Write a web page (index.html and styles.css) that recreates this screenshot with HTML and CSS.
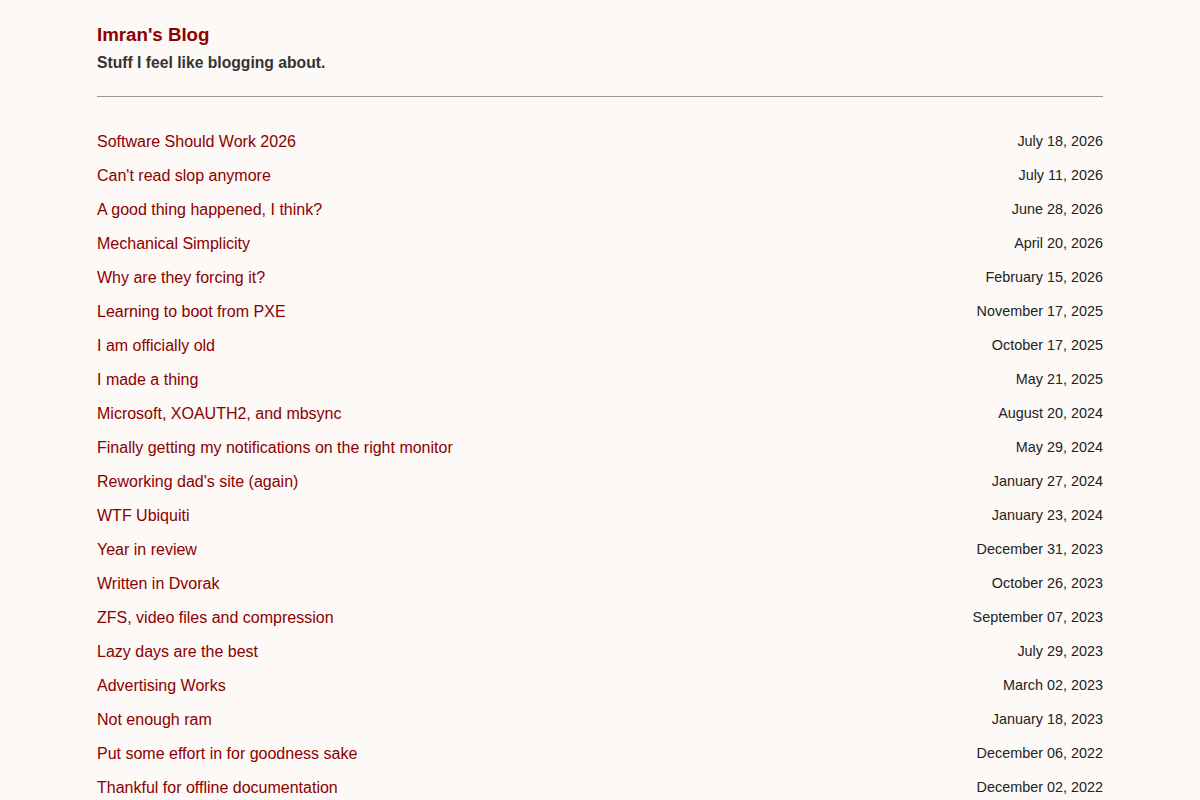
FILE: index.html
```html
<!DOCTYPE html>
<html lang="en">
<head>
    <meta charset="UTF-8">
    <meta name="viewport" content="width=device-width, initial-scale=1.0">
    <title>Imran's Blog</title>
    <link rel="stylesheet" href="styles.css">
</head>
<body>
    <div class="container">
        <header class="site-header">
            <h1 class="site-title"><a href="#">Imran's Blog</a></h1>
            <p class="tagline">Stuff I feel like blogging about.</p>
        </header>
        <hr>
        <ul class="posts">
            <li><a href="#">Software Should Work 2026</a><span class="date">July 18, 2026</span></li>
            <li><a href="#">Can't read slop anymore</a><span class="date">July 11, 2026</span></li>
            <li><a href="#">A good thing happened, I think?</a><span class="date">June 28, 2026</span></li>
            <li><a href="#">Mechanical Simplicity</a><span class="date">April 20, 2026</span></li>
            <li><a href="#">Why are they forcing it?</a><span class="date">February 15, 2026</span></li>
            <li><a href="#">Learning to boot from PXE</a><span class="date">November 17, 2025</span></li>
            <li><a href="#">I am officially old</a><span class="date">October 17, 2025</span></li>
            <li><a href="#">I made a thing</a><span class="date">May 21, 2025</span></li>
            <li><a href="#">Microsoft, XOAUTH2, and mbsync</a><span class="date">August 20, 2024</span></li>
            <li><a href="#">Finally getting my notifications on the right monitor</a><span class="date">May 29, 2024</span></li>
            <li><a href="#">Reworking dad's site (again)</a><span class="date">January 27, 2024</span></li>
            <li><a href="#">WTF Ubiquiti</a><span class="date">January 23, 2024</span></li>
            <li><a href="#">Year in review</a><span class="date">December 31, 2023</span></li>
            <li><a href="#">Written in Dvorak</a><span class="date">October 26, 2023</span></li>
            <li><a href="#">ZFS, video files and compression</a><span class="date">September 07, 2023</span></li>
            <li><a href="#">Lazy days are the best</a><span class="date">July 29, 2023</span></li>
            <li><a href="#">Advertising Works</a><span class="date">March 02, 2023</span></li>
            <li><a href="#">Not enough ram</a><span class="date">January 18, 2023</span></li>
            <li><a href="#">Put some effort in for goodness sake</a><span class="date">December 06, 2022</span></li>
            <li><a href="#">Thankful for offline documentation</a><span class="date">December 02, 2022</span></li>
        </ul>
    </div>
</body>
</html>
```

FILE: styles.css
```css
body {
    font-family: "Liberation Sans", Arial, sans-serif;
    background: #fdf9f6;
    color: #222;
    margin: 0;
    padding: 0;
}
.container {
    width: 1006px;
    margin: 0 auto;
    padding-top: 24px;
}
a {
    color: #8b0000;
    text-decoration: none;
}
.site-title {
    font-size: 18.7px;
    line-height: 22px;
    margin: 0;
}
.tagline {
    font-size: 15.7px;
    line-height: 18px;
    font-weight: bold;
    color: #333;
    margin: 8px 0 0;
}
hr {
    border: none;
    border-top: 1px solid #999;
    margin: 24px 0 27px;
}
.posts {
    list-style: none;
    margin: 0;
    padding: 0;
}
.posts li {
    display: flex;
    justify-content: space-between;
    align-items: center;
    height: 34px;
    font-size: 16px;
}
.posts li a {
    padding-top: 2px;
}
.date {
    font-size: 14.4px;
    color: #222;
}
```
